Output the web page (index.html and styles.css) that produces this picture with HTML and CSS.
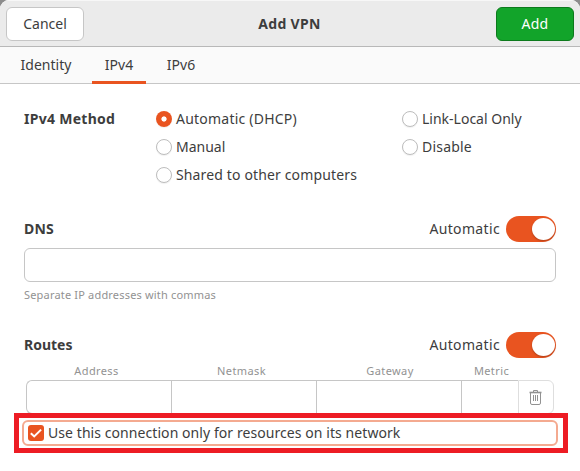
FILE: index.html
```
<!DOCTYPE html>
<html>
	<head>
		<meta charset="utf-8">
		<title>Add VPN</title>
		<link rel="stylesheet" href="styles.css">
	</head>
	<body>
		<div class="dialog">
			<div class="header">
				<button class="btn">Cancel</button>
				<div class="title">Add VPN</div>
				<button class="btn btn-add">Add</button>
			</div>
			<div class="tabs">
				<div class="tab">Identity</div>
				<div class="tab active">IPv4</div>
				<div class="tab">IPv6</div>
			</div>
			<div class="content">
				<div class="method">
					<div class="heading t-method">IPv4 Method</div>
					<div class="options">
						<label><span class="radio checked"></span><span class="t-auto">Automatic (DHCP)</span></label>
						<label><span class="radio"></span>Manual</label>
						<label><span class="radio"></span><span class="t-shared">Shared to other computers</span></label>
					</div>
					<div class="options">
						<label><span class="radio"></span>Link-Local Only</label>
						<label><span class="radio"></span><span class="t-disable">Disable</span></label>
					</div>
				</div>
				<div class="row">
					<div class="heading t-dns">DNS</div>
					<div class="auto">Automatic</div>
					<div class="switch"><div class="knob"></div></div>
				</div>
				<div class="entry"></div>
				<div class="hint">Separate IP addresses with commas</div>
				<div class="row routes-row">
					<div class="heading">Routes</div>
					<div class="auto">Automatic</div>
					<div class="switch"><div class="knob"></div></div>
				</div>
				<div class="routes names">
					<div>Address</div>
					<div>Netmask</div>
					<div class="gateway">Gateway</div>
					<div>Metric</div>
				</div>
				<div class="routes cells">
					<div></div>
					<div></div>
					<div></div>
					<div></div>
					<div class="remove">
						<svg width="16" height="16" viewBox="0 0 16 16" fill="none" stroke="#929292">
							<path d="M5.500 3V1.500h4V3"/>
							<path d="M1.500 3.500h12" stroke-width="1.600"/>
							<path d="M2.500 4v10q0 1.500 1.500 1.500h7q1.500 0 1.500-1.500V4"/>
							<path d="M5.500 6v6M7.500 6v6M9.500 6v6"/>
						</svg>
					</div>
				</div>
			</div>
			<div class="highlight">
				<label class="only">
					<span class="check">
						<svg width="16" height="16" viewBox="0 0 16 16" fill="none" stroke="#fff" stroke-width="2">
							<path d="M2.800 8.200l3.400 3.200 6.900-6.800"/>
						</svg>
					</span>
					<span class="t-only">Use this connection only for resources on its network</span>
				</label>
			</div>
		</div>
	</body>
</html>
```
FILE: styles.css
```
*{
	box-sizing: border-box;
}
body{
	margin: 0;
	background: #8c8c8c;
	color: #3d3d3d;
	font-family: "Noto Sans", "Open Sans", sans-serif;
	font-size: 14px;
	line-height: 20px;
	white-space: nowrap;
}
.dialog{
	height: 471px;
	overflow: hidden;
	background: #fff;
	border-radius: 9px 9px 0 0;
}
.header{
	display: flex;
	justify-content: space-between;
	align-items: center;
	height: 47px;
	padding: 0 6px;
	background: #ebebeb;
	border-top: 1px solid #f7f7f7;
	border-bottom: 1px solid #b8b8b8;
}
.btn{
	width: 78px;
	height: 34px;
	padding: 0;
	border: 1px solid #c6c6c6;
	border-radius: 6px;
	background: #fff;
	color: inherit;
	font: inherit;
}
.btn-add{
	border-color: #0c7a1c;
	background: #12a42a;
	color: #fff;
	letter-spacing: 0.3px;
}
.title{
	padding-right: 1px;
	font-weight: bold;
	letter-spacing: 0.3px;
}
.tabs{
	display: flex;
	height: 37px;
	padding-left: 8px;
	background: #fafafa;
	border-bottom: 1px solid #c6c6c6;
}
.tab{
	width: 54px;
	height: 37px;
	margin-right: 8px;
	line-height: 36px;
	text-align: center;
}
.tab:first-child{
	width: 76px;
}
.tab.active{
	border-bottom: 3px solid #e95420;
}
.content{
	padding: 21px 24px 0;
}
.heading{
	font-weight: bold;
}
.t-method{
	letter-spacing: 0.28px;
}
.t-auto{
	letter-spacing: 0.22px;
}
.t-shared{
	letter-spacing: 0.14px;
}
.t-disable{
	letter-spacing: 0.2px;
}
.t-dns{
	letter-spacing: 0.2px;
}
.t-only{
	letter-spacing: 0.07px;
}
.method{
	display: grid;
	grid-template-columns: 132px 246px 1fr;
	line-height: 28px;
}
.options label{
	display: flex;
	align-items: center;
	gap: 4px;
	height: 28px;
}
.radio{
	width: 16px;
	height: 16px;
	border: 1px solid #bdbdbd;
	border-radius: 50%;
	background: #fff;
	box-shadow: 0 1px 1px rgba(0,0,0,0.06);
}
.radio.checked{
	border: none;
	background: radial-gradient(circle, #fff 2.2px, #e95420 3px);
}
.row{
	display: flex;
	align-items: center;
	height: 26px;
	margin-top: 27px;
}
.auto{
	margin-left: auto;
	margin-right: 6px;
	letter-spacing: 0.35px;
}
.switch{
	width: 50px;
	height: 26px;
	padding: 2px 1px;
	border-radius: 13px;
	background: #e95420;
}
.knob{
	width: 23px;
	height: 22px;
	margin-left: auto;
	border-radius: 50%;
	background: #fff;
	box-shadow: 0 1px 2px rgba(0,0,0,0.25);
}
.entry{
	height: 34px;
	margin-top: 6px;
	border: 1px solid #c6c6c6;
	border-radius: 6px;
}
.hint{
	height: 16px;
	margin-top: 5px;
	color: #929292;
	font-size: 11px;
	line-height: 16px;
	letter-spacing: 0.18px;
}
.routes-row{
	margin-top: 29px;
}
.routes{
	display: grid;
	grid-template-columns: 145px 145px 145px 57px 36px;
	margin: 0 2px;
}
.names{
	height: 22px;
	color: #929292;
	font-size: 11px;
	line-height: 25px;
	text-align: center;
	letter-spacing: 0.4px;
}
.names div{
	padding-right: 4px;
}
.names .gateway{
	padding: 0 0 0 3px;
}
.names div:last-child{
	padding: 0 0 0 4px;
}
.cells div{
	height: 34px;
	border: 1px solid #c6c6c6;
	border-right: none;
}
.cells div:first-child{
	border-radius: 6px 0 0 6px;
}
.cells .remove{
	display: flex;
	align-items: center;
	justify-content: center;
	border: 1px solid #dedede;
	border-radius: 0 6px 6px 0;
}
/* red frame goes over the lower edge of the table */
.highlight{
	position: relative;
	width: 554px;
	height: 40px;
	margin: -1px 0 0 14px;
	padding: 2px 5px 2px 3px;
	border: 5px solid #ed1c24;
	background: #fff;
}
.only{
	display: flex;
	align-items: center;
	gap: 4px;
	height: 26px;
	padding-left: 4px;
	border: 2px solid #f4aa90;
	border-radius: 6px;
}
.check{
	width: 16px;
	height: 16px;
	border-radius: 3px;
	background: #e95420;
}
.check svg{
	display: block;
}
```
